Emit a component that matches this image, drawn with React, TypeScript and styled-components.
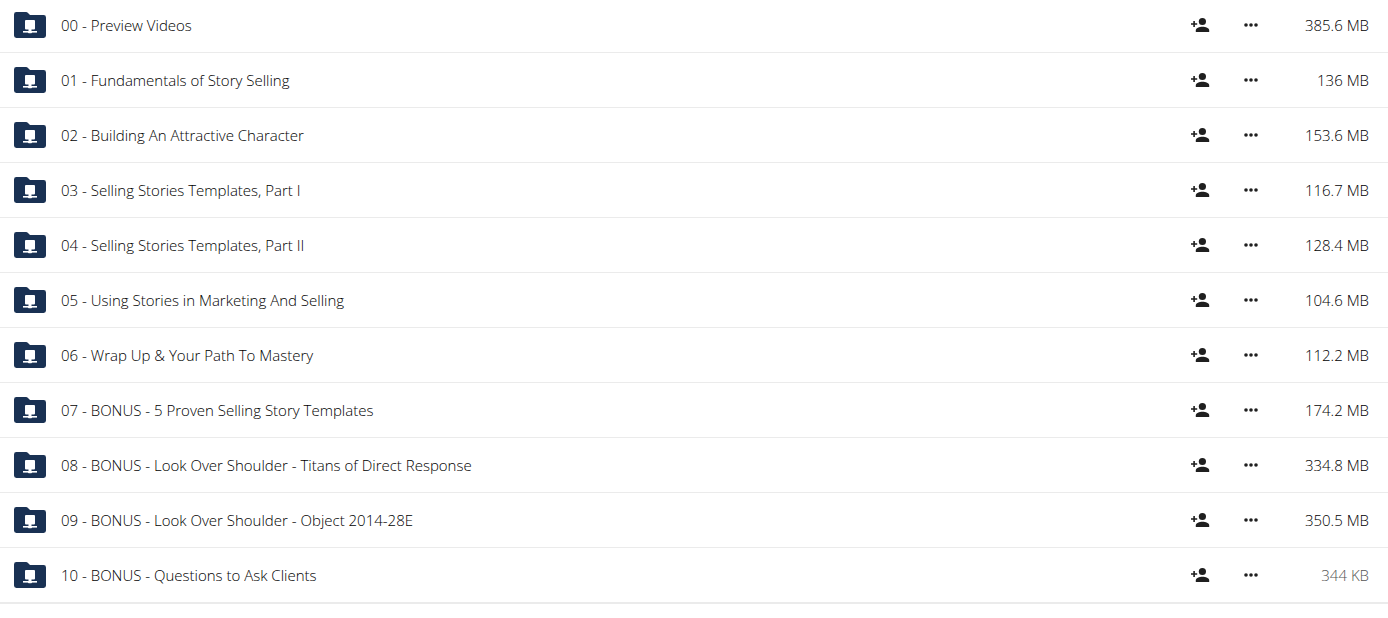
import React from "react";
import styled, { createGlobalStyle } from "styled-components";

const GlobalStyle = createGlobalStyle`
  * { box-sizing: border-box; }
  body {
    margin: 0;
    background: #fff;
    color: #000;
    font-family: "Open Sans", "Segoe UI", "Noto Sans", sans-serif;
    font-size: 15px;
    line-height: 20px;
    font-weight: 300;
  }
`;

const Viewport = styled.main`
  overflow: hidden;
`;

/* The list rests scrolled slightly under the top edge of its viewport. */
const FileTable = styled.table`
  width: 100%;
  margin-top: -2px;
  border-collapse: separate;
  border-spacing: 0;
  table-layout: fixed;
  border-bottom: 1px solid #ebebeb;
`;

const IconCol = styled.col`
  width: 60px;
`;

const ActionCol = styled.col`
  width: 51px;
`;

const SizeCol = styled.col`
  width: 112px;
`;

const Cell = styled.td`
  height: 55px;
  padding: 0;
  border-bottom: 1px solid #ebebeb;
  vertical-align: middle;
`;

const IconCell = styled(Cell)`
  padding-left: 14px;
`;

const ActionCell = styled(Cell)`
  text-align: center;
`;

const SizeCell = styled(Cell)<{ $muted: boolean }>`
  padding-right: 19px;
  text-align: right;
  color: ${(p) => (p.$muted ? "#555" : "#000")};
`;

const FileLink = styled.a`
  display: block;
  padding-left: 1px;
  color: inherit;
  text-decoration: none;
  white-space: nowrap;
  overflow: hidden;
  text-overflow: ellipsis;
`;

const ActionButton = styled.button`
  display: inline-flex;
  align-items: center;
  justify-content: center;
  width: 32px;
  height: 32px;
  padding: 0;
  border: 0;
  background: none;
  color: #1f1f1f;
  vertical-align: middle;
  cursor: pointer;
`;

const Icon = styled.svg`
  display: block;
`;

const FolderIcon = () => (
  <Icon width="32" height="26" viewBox="0 0 32 26" aria-hidden="true">
    <path
      fill="#193153"
      d="M2.4 0H12c.8 0 1.4.3 2 .9l1.5 1.500c.4.4.8.6 1.400.6h12.700A2.400 2.400 0 0 1 32 5.400v18.200a2.400 2.400 0 0 1-2.400 2.400H2.400A2.400 2.400 0 0 1 0 23.600V2.400A2.400 2.400 0 0 1 2.400 0Z"
    />
    <g fill="#fff">
      <rect x="11" y="8" width="10" height="9.600" rx="1" />
      <rect x="14.500" y="17" width="3" height="2.500" />
      <rect x="9" y="19" width="14" height="1.600" />
      <rect x="14" y="19" width="4" height="2.300" rx=".8" />
    </g>
  </Icon>
);

const ShareIcon = () => (
  <Icon width="20" height="16" viewBox="0 0 20 16" fill="currentColor" aria-hidden="true">
    <circle cx="12.400" cy="4.500" r="3.600" />
    <path d="M5.800 14.900v-1.500c0-2.400 3.500-3.700 6.700-3.700s6.700 1.300 6.700 3.700v1.500Z" />
    <path d="M3.300 3.900h1.600v2.300h2.300v1.600H4.900v2.300H3.300V7.800H1V6.200h2.300Z" />
  </Icon>
);

const MoreIcon = () => (
  <Icon width="16" height="6" viewBox="0 0 16 6" fill="currentColor" aria-hidden="true">
    <circle cx="3" cy="3" r="1.800" />
    <circle cx="8" cy="3" r="1.800" />
    <circle cx="13" cy="3" r="1.800" />
  </Icon>
);

const files = [
  { name: "00 - Preview Videos", size: "385.6 MB" },
  { name: "01 - Fundamentals of Story Selling", size: "136 MB" },
  { name: "02 - Building An Attractive Character", size: "153.6 MB" },
  { name: "03 - Selling Stories Templates, Part I", size: "116.7 MB" },
  { name: "04 - Selling Stories Templates, Part II", size: "128.4 MB" },
  { name: "05 - Using Stories in Marketing And Selling", size: "104.6 MB" },
  { name: "06 - Wrap Up & Your Path To Mastery", size: "112.2 MB" },
  { name: "07 - BONUS - 5 Proven Selling Story Templates", size: "174.2 MB" },
  { name: "08 - BONUS - Look Over Shoulder - Titans of Direct Response", size: "334.8 MB" },
  { name: "09 - BONUS - Look Over Shoulder - Object 2014-28E", size: "350.5 MB" },
  { name: "10 - BONUS - Questions to Ask Clients", size: "344 KB" },
];

export default function App() {
  return (
    <Viewport>
      <GlobalStyle />
      <FileTable>
        <colgroup>
          <IconCol />
          <col />
          <ActionCol />
          <ActionCol />
          <SizeCol />
        </colgroup>
        <tbody>
          {files.map((file) => (
            <tr key={file.name}>
              <IconCell>
                <FolderIcon />
              </IconCell>
              <Cell>
                <FileLink href="#">{file.name}</FileLink>
              </Cell>
              <ActionCell>
                <ActionButton type="button" aria-label={`Share ${file.name}`}>
                  <ShareIcon />
                </ActionButton>
              </ActionCell>
              <ActionCell>
                <ActionButton type="button" aria-label={`More actions for ${file.name}`}>
                  <MoreIcon />
                </ActionButton>
              </ActionCell>
              <SizeCell $muted={file.size.endsWith("KB")}>{file.size}</SizeCell>
            </tr>
          ))}
        </tbody>
      </FileTable>
    </Viewport>
  );
}
